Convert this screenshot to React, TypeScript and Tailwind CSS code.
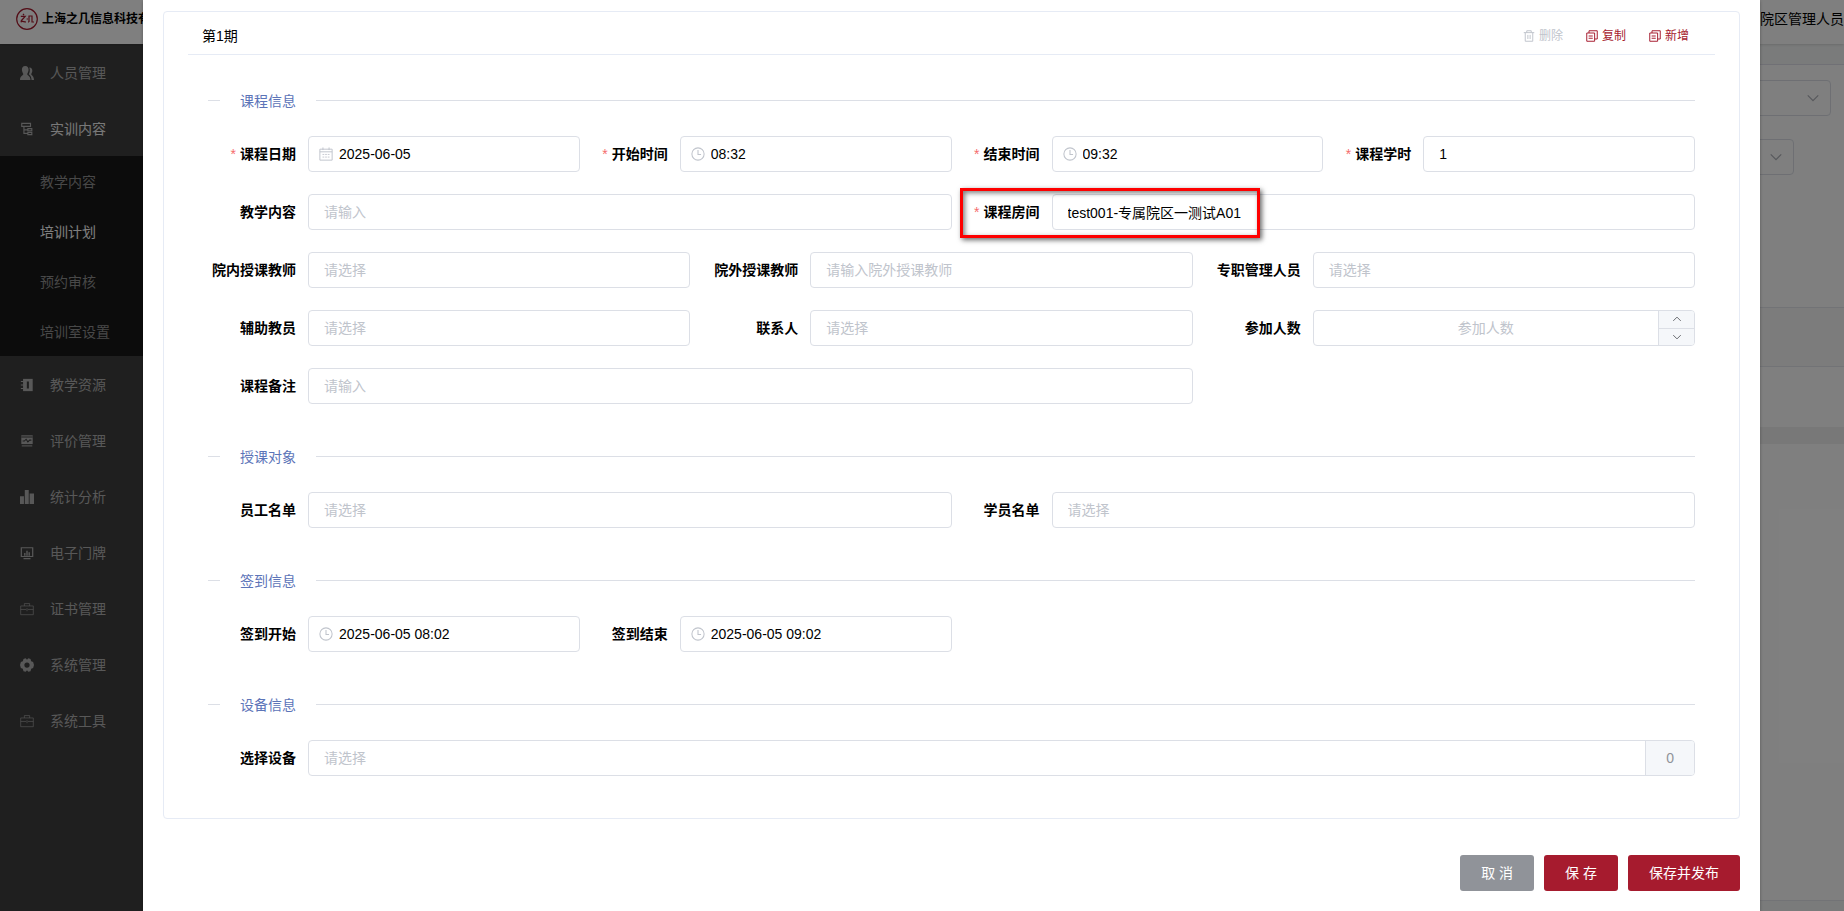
import type { ReactNode } from "react";
import { clsx } from "clsx";

const Svg = ({ children, className }: { children: ReactNode; className?: string }) => (
  <svg viewBox="0 0 16 16" fill="none" stroke="currentColor" aria-hidden="true" className={clsx("shrink-0", className)}>
    {children}
  </svg>
);

const ClockIcon = () => (
  <Svg className="size-[14px]">
    <circle cx="8" cy="8" r="7" strokeWidth="1.2" />
    <path strokeWidth="1.2" d="M8 3.5V8.5H11.5" />
  </Svg>
);

const CalendarIcon = () => (
  <Svg className="size-[14px]">
    <path strokeWidth="1.1" d="M1 2.5H15V15H1ZM1 5.5H15M4.5 0.5V3.5M11.5 0.5V3.5" />
    <path d="M4 8.5H6M7 8.5H9M10 8.5H12M4 11.5H6M7 11.5H9M10 11.5H12" />
  </Svg>
);

const TrashIcon = () => (
  <Svg className="size-3">
    <path strokeWidth="1.3" d="M1 3.5H15M5 3.5V1H11V3.5M3 3.5V15H13V3.5M6.5 6.5V12M9.5 6.5V12" />
  </Svg>
);

const CopyIcon = () => (
  <Svg className="size-3">
    <path strokeWidth="1.3" d="M1 4H11.5V15H1ZM4 4V1H15V12H11.5M3.5 8H9M3.5 11H9" />
  </Svg>
);

const Chevron = ({ up, className }: { up?: boolean; className?: string }) => (
  <Svg className={className}>
    <path strokeWidth="1.5" d={up ? "M2 11L8 5L14 11" : "M2 5L8 11L14 5"} />
  </Svg>
);

const icons: Record<string, ReactNode> = {
  user: (
    <g fill="currentColor" stroke="none">
      <path d="M6 0C8.8 0 10 2 9.8 4.6C9.6 6.6 8.8 8 8.2 9C8.2 10.8 12 11 12 16H0C0 11 3.8 10.8 3.8 9C3.2 8 2.4 6.6 2.2 4.6C2 2 3.2 0 6 0Z" />
      <path d="M10.6 1.6C13.4 1.6 14.4 4 14 6.2C13.7 7.6 13.2 8.4 12.8 9.2C12.8 10.6 16 11.4 16 16H13.2C13 12.4 12 10.8 10 9.4C11 7.6 11.9 4.4 10.6 1.6Z" />
    </g>
  ),
  tree: <path strokeWidth="1.3" d="M2 1.5H12V5H2ZM4.5 5V13H9M4.5 9H9M9 7.5H13.5V10.2H9ZM9 12H13.5V14.5H9Z" />,
  book: (
    <>
      <path fill="currentColor" stroke="none" d="M3.5 1H14.5V15H3.5Z" />
      <path strokeWidth="1.2" d="M1 4H4M1 8H4M1 12H4" />
      <path stroke="#3f3f3f" strokeWidth="2.4" d="M9 4V12" />
    </>
  ),
  chart: (
    <>
      <path fill="currentColor" stroke="none" d="M1.5 1.5H14.5V11.5H1.5Z" />
      <path stroke="#3f3f3f" strokeWidth="1.2" d="M1.5 3.5H14.5M3 8H5L7 6L9 9L11 7H13" />
      <path strokeOpacity="0.6" strokeWidth="2" d="M2 13.5H14" />
    </>
  ),
  bars: <path fill="currentColor" stroke="none" d="M0 7H4.5V16H0ZM5.5 0H10V16H5.5ZM11 4H16V16H11Z" />,
  screen: (
    <>
      <path strokeWidth="1.4" d="M1.5 2H14.5V12H1.5ZM4 14.5H12" />
      <path strokeWidth="1.6" d="M5.5 11V8M8 11V5.5M10.5 11V7" />
    </>
  ),
  briefcase: <path strokeOpacity="0.7" d="M0.8 4.5H15.2V14.5H0.8ZM5 4.5V1.8H11V4.5M0.8 8.5H7M9 8.5H15.2M8 7V10.5" />,
  gear: (
    <path
      fill="currentColor"
      fillRule="evenodd"
      stroke="none"
      d="M4 1L6.5 0.4L8 2L9.5 0.4L12 1L12.8 3.6L15 4.6L16 8L15 11.4L12.8 12.4L12 15L9.5 15.6L8 14L6.5 15.6L4 15L3.2 12.4L1 11.4L0 8L1 4.6L3.2 3.6ZM8 5A3 3 0 1 0 8 11A3 3 0 1 0 8 5Z"
    />
  ),
};

const menu = [
  { icon: "user", label: "人员管理" },
  {
    icon: "tree",
    label: "实训内容",
    children: ["教学内容", "培训计划", "预约审核", "培训室设置"],
  },
  { icon: "book", label: "教学资源" },
  { icon: "chart", label: "评价管理" },
  { icon: "bars", label: "统计分析" },
  { icon: "screen", label: "电子门牌" },
  { icon: "briefcase", label: "证书管理" },
  { icon: "gear", label: "系统管理" },
  { icon: "briefcase", label: "系统工具" },
];

const Sidebar = () => (
  <nav className="w-50 shrink-0 bg-[#3f3f3f] text-[#b0b0b0]">
    {menu.map(({ icon, label, children }) => (
      <div key={label}>
        <a href="#" className={clsx("flex h-14 items-center gap-4 pt-[2px] pl-5", children && "text-[#f0f0f0]")}>
          <Svg className={clsx("size-[14px]", children && "text-[#b0b0b0]")}>{icons[icon]}</Svg>
          {label}
        </a>
        {children && (
          <div className="bg-[#181818]">
            {children.map((item) => (
              <a
                key={item}
                href="#"
                className={clsx("flex h-[50px] items-center pt-[2px] pl-10", item === "培训计划" ? "text-white" : "text-[#909090]")}
              >
                {item}
              </a>
            ))}
          </div>
        )}
      </div>
    ))}
  </nav>
);

const Backdrop = () => (
  <div className="absolute inset-0 flex flex-col" aria-hidden="true">
    <header className="z-10 flex h-11 shrink-0 items-center justify-between bg-white pb-[6px] pl-4 shadow-sm">
      <div className="flex items-center gap-1 text-xs font-bold">
        <svg viewBox="0 0 22 22" className="size-[22px]" fill="none" stroke="#a61b2e">
          <circle cx="11" cy="11" r="10.3" strokeWidth="1.2" />
          <path strokeWidth="1.2" d="M7 5.8L8 7.2M4.8 8.4H9.2L5 13M4.6 14C6.5 12.6 7.5 14 10 14M10.6 11H12M13 14V8H16V14H18M13 14H12" />
        </svg>
        上海之几信息科技有限公司
      </div>
      <span>专属院区管理人员</span>
    </header>
    <div className="flex flex-1">
      <Sidebar />
      <main className="flex flex-1 flex-col">
        <div className="h-[21px] border-b border-[#e0e0ea] bg-[#f5f7f7]" />
        <div className="mt-[15px] mr-[13px] flex h-9 items-center justify-end rounded border border-[#dcdfe6] pr-[10px] text-[#b0b3ba]">
          <Chevron className="size-[14px]" />
        </div>
        <div className="mt-[23px] mr-[50px] flex h-9 items-center justify-end rounded border border-[#dcdfe6] pr-[10px] text-[#b0b3ba]">
          <Chevron className="size-[14px]" />
        </div>
        <div className="mt-[132px] h-15 border-y border-[#e4e6ec] bg-[#f8f8f9]" />
        <div className="h-[60px]" />
        <div className="h-[17px] bg-[#f1f1f1]" />
        <div className="flex-1" />
        <div className="h-[11px] border-t border-[#e4e7ed] bg-[#f5f7f7]" />
      </main>
    </div>
  </div>
);

type FieldProps = {
  id: string;
  label: string;
  value?: string;
  placeholder?: string;
  required?: boolean;
  wide?: boolean;
  icon?: ReactNode;
  marked?: boolean;
  className?: string;
  inputClass?: string;
  suffix?: ReactNode;
};

const Field = ({ id, label, value, placeholder, required, wide, icon, marked, className, inputClass, suffix }: FieldProps) => (
  <div className={clsx("relative flex min-w-0", className)}>
    <label htmlFor={id} className={clsx("shrink-0 pr-3 text-right leading-9 font-bold", wide ? "w-30" : "w-25")}>
      {required && <span className="mr-1 font-normal text-[#f56c6c]">*</span>}
      {label}
    </label>
    <div className="flex h-9 min-w-0 flex-1 items-center overflow-hidden rounded border border-[#dcdfe6]">
      {icon && <span className="ml-[10px] text-[#c0c4cc]">{icon}</span>}
      <input
        id={id}
        defaultValue={value}
        placeholder={placeholder}
        className={clsx(
          "h-full min-w-0 flex-1 bg-transparent outline-none placeholder:text-[#c0c4cc]",
          icon ? "pl-[6px]" : "px-[15px]",
          inputClass,
        )}
      />
      {suffix}
    </div>
    {marked && (
      <div className="pointer-events-none absolute -top-[6px] left-2 h-[50px] w-75 border-3 border-[#fe0000] shadow-[2px_2px_5px_rgba(0,0,0,0.6),inset_2px_2px_5px_rgba(0,0,0,0.5)]" />
    )}
  </div>
);

const Section = ({ title, children }: { title: string; children: ReactNode }) => (
  <section className="px-5 pt-5">
    <div className="mb-[25px] flex h-[21px] items-center gap-5 text-[#5c74b8]">
      <span className="h-px w-3 bg-[#dcdfe6]" />
      <h3>{title}</h3>
      <span className="h-px flex-1 bg-[#dcdfe6]" />
    </div>
    {children}
  </section>
);

const Row = ({ cols, children }: { cols: 1 | 2 | 3 | 4; children: ReactNode }) => (
  <div
    className={clsx(
      "grid pb-[22px]",
      cols === 1 && "grid-cols-1",
      cols === 2 && "grid-cols-2",
      cols === 3 && "-ml-5 grid-cols-3",
      cols === 4 && "grid-cols-4",
    )}
  >
    {children}
  </div>
);

const Stepper = () => (
  <div className="flex h-full w-9 shrink-0 flex-col border-l border-[#dcdfe6] bg-[#f5f7fa] text-[#606266]">
    <button type="button" aria-label="增加" className="flex flex-1 items-center justify-center border-b border-[#dcdfe6]">
      <Chevron up className="size-[10px]" />
    </button>
    <button type="button" aria-label="减少" className="flex flex-1 items-center justify-center">
      <Chevron className="size-[10px]" />
    </button>
  </div>
);

export default function App() {
  return (
    <div className="relative min-h-screen overflow-hidden bg-white font-['Liberation_Sans','Noto_Sans_CJK_SC',sans-serif] text-sm text-black">
      <Backdrop />
      <div className="relative z-20 min-h-screen bg-black/50 pr-21 pl-[143px]">
        <div role="dialog" aria-label="培训计划" className="min-h-screen bg-white px-5 pt-[11px] pb-5 shadow-[0_1px_3px_rgba(0,0,0,0.3)]">
          <form>
            <div className="rounded border border-[#e6ebf5] px-6 pb-5">
              <div className="mb-[15px] flex h-[43px] items-center justify-between border-b border-[#e6ebf5] pt-[6px] pr-[26px] pl-[14px]">
                <h2>第1期</h2>
                <div className="flex gap-[23px] text-xs text-[#a61b2e]">
                  <button type="button" disabled className="flex items-center gap-1 text-[#c0c4cc]">
                    <TrashIcon />
                    删除
                  </button>
                  <button type="button" className="flex items-center gap-1">
                    <CopyIcon />
                    复制
                  </button>
                  <button type="button" className="flex items-center gap-1">
                    <CopyIcon />
                    新增
                  </button>
                </div>
              </div>

              <Section title="课程信息">
                <Row cols={4}>
                  <Field id="date" label="课程日期" required value="2025-06-05" icon={<CalendarIcon />} />
                  <Field id="start" label="开始时间" required value="08:32" icon={<ClockIcon />} />
                  <Field id="end" label="结束时间" required value="09:32" icon={<ClockIcon />} />
                  <Field id="hours" label="课程学时" required value="1" />
                </Row>
                <Row cols={2}>
                  <Field id="content" label="教学内容" placeholder="请输入" />
                  <Field id="room" label="课程房间" required value="test001-专属院区一测试A01" marked />
                </Row>
                <Row cols={3}>
                  <Field wide id="teacher" label="院内授课教师" placeholder="请选择" />
                  <Field wide id="outer" label="院外授课教师" placeholder="请输入院外授课教师" />
                  <Field wide id="manager" label="专职管理人员" placeholder="请选择" />
                </Row>
                <Row cols={3}>
                  <Field wide id="assistant" label="辅助教员" placeholder="请选择" />
                  <Field wide id="contact" label="联系人" placeholder="请选择" />
                  <Field wide id="count" label="参加人数" placeholder="参加人数" inputClass="text-center" suffix={<Stepper />} />
                </Row>
                <Row cols={3}>
                  <Field wide id="remark" label="课程备注" placeholder="请输入" className="col-span-2" />
                </Row>
              </Section>

              <Section title="授课对象">
                <Row cols={2}>
                  <Field id="staff" label="员工名单" placeholder="请选择" />
                  <Field id="students" label="学员名单" placeholder="请选择" />
                </Row>
              </Section>

              <Section title="签到信息">
                <Row cols={4}>
                  <Field id="signStart" label="签到开始" value="2025-06-05 08:02" icon={<ClockIcon />} />
                  <Field id="signEnd" label="签到结束" value="2025-06-05 09:02" icon={<ClockIcon />} />
                </Row>
              </Section>

              <Section title="设备信息">
                <Row cols={1}>
                  <Field
                    id="device"
                    label="选择设备"
                    placeholder="请选择"
                    suffix={
                      <span className="h-full shrink-0 border-l border-[#dcdfe6] bg-[#f5f7fa] px-5 leading-[34px] text-[#909399]">0</span>
                    }
                  />
                </Row>
              </Section>
            </div>

            <div className="mt-9 flex justify-end gap-[10px] text-white">
              <button type="button" className="h-9 rounded-[3px] bg-[#909399] px-[21px]">取 消</button>
              <button type="button" className="h-9 rounded-[3px] bg-[#a61b2e] px-[21px]">保 存</button>
              <button type="submit" className="h-9 rounded-[3px] bg-[#a61b2e] px-[21px]">保存并发布</button>
            </div>
          </form>
        </div>
      </div>
    </div>
  );
}
